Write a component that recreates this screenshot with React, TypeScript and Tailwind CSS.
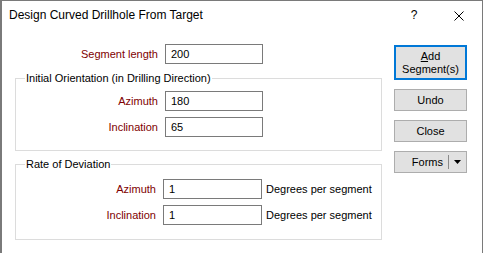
import React from 'react';

const labelCls = 'text-[#800000] text-right';
const inputCls =
  'h-[20px] border border-[#7a7a7a] bg-white px-[5px] text-[11px] text-black outline-none';

function Row({ label, value, labelW, inputW, suffix }: { label: string; value: string; labelW: string; inputW: string; suffix?: string }) {
  return (
    <div className="flex items-center h-[20px]">
      <div className={`${labelCls} ${labelW}`}>{label}</div>
      <input readOnly value={value} className={`${inputCls} ${inputW}`} />
      {suffix && <span className="ml-[4px] text-black">{suffix}</span>}
    </div>
  );
}

function GroupBox({ title, className, children }: { title: string; className: string; children: React.ReactNode }) {
  return (
    <div className={`relative border border-[#dcdcdc] ${className}`}>
      <span className="absolute left-[9px] top-[-7px] bg-white px-[1px] text-black">{title}</span>
      {children}
    </div>
  );
}

const btn =
  'w-[73px] h-[22px] bg-[#e1e1e1] border border-[#adadad] flex items-center justify-center text-black';

export default function App() {
  return (
    <div className="w-[487px] h-[253px] bg-white overflow-hidden font-['Liberation_Sans',Arial,sans-serif] text-[11px] leading-[13px]">
      <div className="w-[483px] h-full border-l-2 border-t border-r border-[#7a7a7a] flex flex-col">
        {/* Title bar */}
        <div className="h-[29px] flex items-center pl-[7px] text-[12px] text-black shrink-0">
          <span className="flex-1">Design Curved Drillhole From Target</span>
          <span className="w-[12px] text-center mr-[34px]">?</span>
          <svg width="10" height="10" viewBox="0 0 10 10" className="mr-[18px]">
            <path d="M0.5 0.5 L9.5 9.5 M9.5 0.5 L0.5 9.5" stroke="#000" strokeWidth="1" fill="none" />
          </svg>
        </div>

        <div className="flex">
          {/* Left column */}
          <div className="ml-[13px] w-[367px] flex flex-col">
            <div className="mt-[14px]">
              <Row label="Segment length" value="200" labelW="w-[150px] pr-[7px]" inputW="w-[98px]" />
            </div>

            <GroupBox title="Initial Orientation (in Drilling Direction)" className="mt-[14px] pt-[12px] pb-[13px]">
              <div className="flex flex-col gap-[6px]">
                <Row label="Azimuth" value="180" labelW="w-[149px] pr-[7px]" inputW="w-[98px]" />
                <Row label="Inclination" value="65" labelW="w-[149px] pr-[7px]" inputW="w-[98px]" />
              </div>
            </GroupBox>

            <GroupBox title="Rate of Deviation" className="mt-[13px] pt-[14px] pb-[14px]">
              <div className="flex flex-col gap-[6px]">
                <Row label="Azimuth" value="1" labelW="w-[147px] pr-[7px]" inputW="w-[99px]" suffix="Degrees per segment" />
                <Row label="Inclination" value="1" labelW="w-[147px] pr-[7px]" inputW="w-[99px]" suffix="Degrees per segment" />
              </div>
            </GroupBox>
          </div>

          {/* Buttons */}
          <div className="ml-[12px] mt-[15px] flex flex-col gap-[9px]">
            <button className="w-[73px] h-[35px] bg-[#e1e1e1] border-2 border-[#0078d7] flex flex-col items-center justify-center text-black leading-[13px]">
              <span><span className="underline">A</span>dd</span>
              <span>Segment(s)</span>
            </button>
            <button className={btn}>Undo</button>
            <button className={btn}>Close</button>
            <button className={`${btn} justify-end`}>
              <span className="pr-[5px]">Forms</span>
              <span className="w-px h-[14px] bg-[#8a8a8a]" />
              <svg width="17" height="8" viewBox="0 0 17 8">
                <path d="M5 2 L12 2 L8.5 6 Z" fill="#000" />
              </svg>
            </button>
          </div>
        </div>
      </div>
    </div>
  );
}
